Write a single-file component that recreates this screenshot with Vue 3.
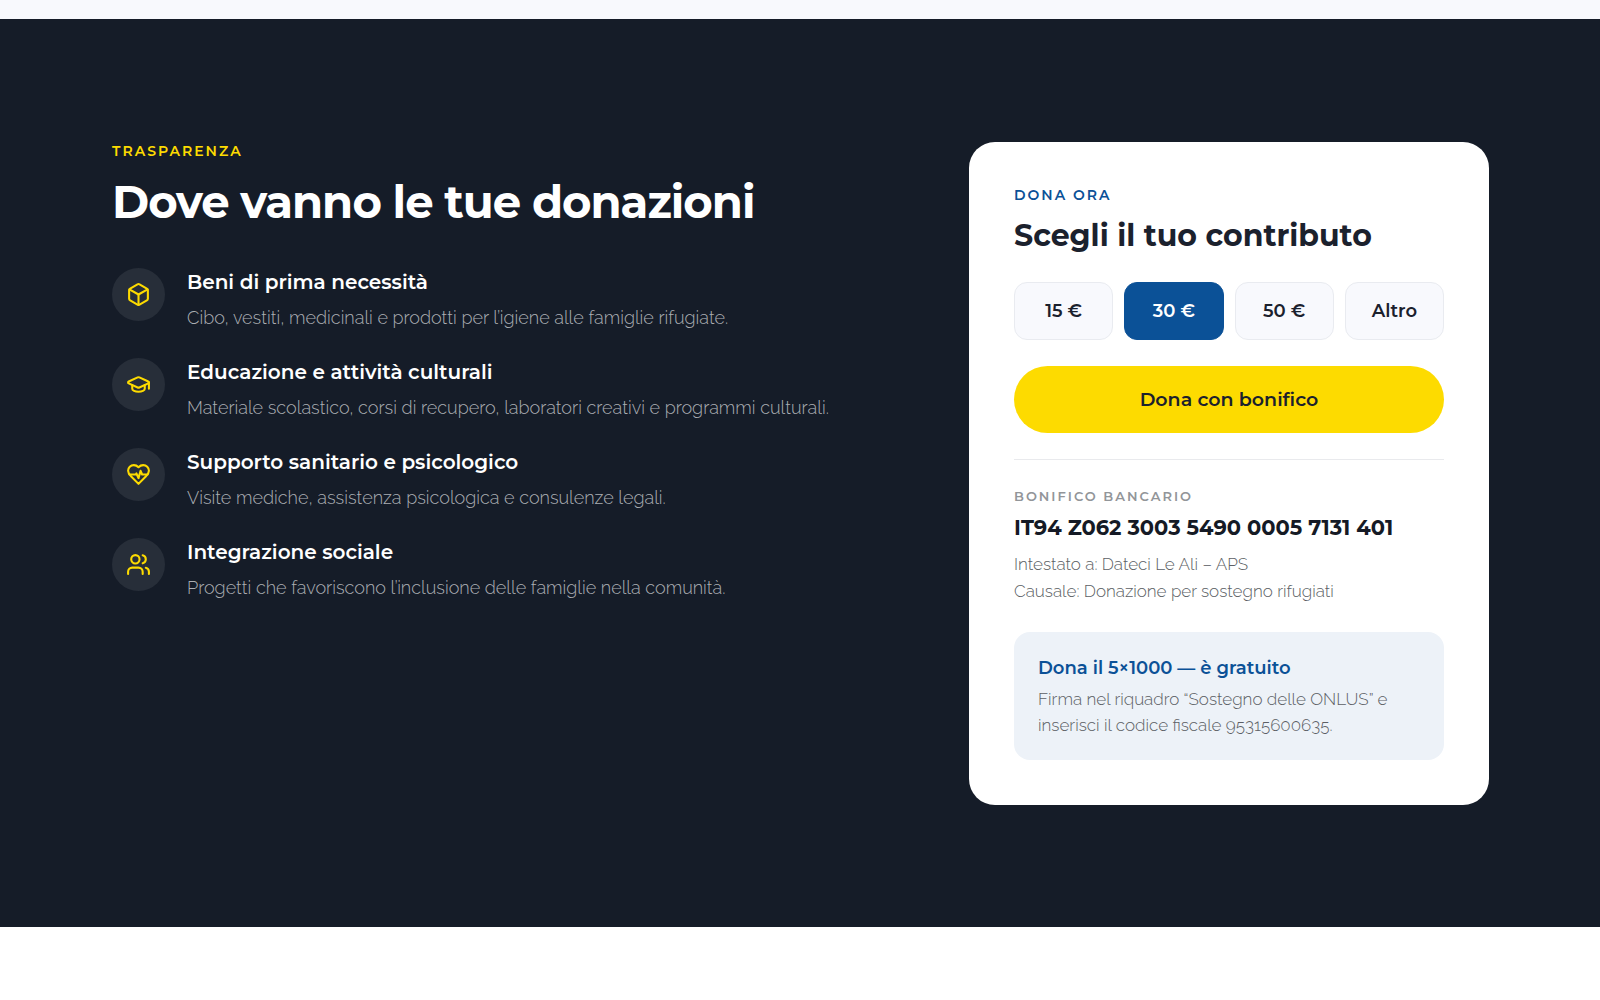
<script setup>
import { ref } from 'vue'

const items = [
  {
    title: 'Beni di prima necessità',
    text: 'Cibo, vestiti, medicinali e prodotti per l’igiene alle famiglie rifugiate.',
    paths: [
      'M21 8a2 2 0 0 0-1-1.73l-7-4a2 2 0 0 0-2 0l-7 4A2 2 0 0 0 3 8v8a2 2 0 0 0 1 1.73l7 4a2 2 0 0 0 2 0l7-4A2 2 0 0 0 21 16Z',
      'm3.3 7 8.7 5 8.7-5',
      'M12 22V12'
    ]
  },
  {
    title: 'Educazione e attività culturali',
    text: 'Materiale scolastico, corsi di recupero, laboratori creativi e programmi culturali.',
    paths: [
      'M21.42 10.922a1 1 0 0 0-.019-1.838L12.83 5.18a2 2 0 0 0-1.66 0L2.6 9.08a1 1 0 0 0 0 1.832l8.57 3.908a2 2 0 0 0 1.66 0z',
      'M22 10v6',
      'M6 12.5V16a6 3 0 0 0 12 0v-3.5'
    ]
  },
  {
    title: 'Supporto sanitario e psicologico',
    text: 'Visite mediche, assistenza psicologica e consulenze legali.',
    paths: [
      'M19 14c1.49-1.46 3-3.21 3-5.5A5.5 5.5 0 0 0 16.5 3c-1.76 0-3 .5-4.5 2-1.5-1.5-2.74-2-4.5-2A5.5 5.5 0 0 0 2 8.5c0 2.3 1.5 4.05 3 5.5l7 7Z',
      'M3.22 12H9.5l.5-1 2 4.5 2-7 1.5 3.5h5.27'
    ]
  },
  {
    title: 'Integrazione sociale',
    text: 'Progetti che favoriscono l’inclusione delle famiglie nella comunità.',
    paths: [
      'M16 21v-2a4 4 0 0 0-4-4H6a4 4 0 0 0-4 4v2',
      'M13 7a4 4 0 1 1-8 0a4 4 0 1 1 8 0',
      'M22 21v-2a4 4 0 0 0-3-3.87',
      'M16 3.13a4 4 0 0 1 0 7.75'
    ]
  }
]

const amounts = ['15 €', '30 €', '50 €', 'Altro']
const selected = ref('30 €')
</script>

<template>
  <main class="page">
    <section class="donations">
      <div class="container">
        <div class="info">
          <p class="eyebrow">TRASPARENZA</p>
          <h2>Dove vanno le tue donazioni</h2>
          <ul class="items">
            <li v-for="item in items" :key="item.title" class="item">
              <span class="icon">
                <svg viewBox="0 0 24 24" aria-hidden="true">
                  <path v-for="d in item.paths" :key="d" :d="d" />
                </svg>
              </span>
              <div>
                <h3>{{ item.title }}</h3>
                <p>{{ item.text }}</p>
              </div>
            </li>
          </ul>
        </div>

        <aside class="card">
          <p class="eyebrow blue">DONA ORA</p>
          <h3 class="card-title">Scegli il tuo contributo</h3>
          <div class="amounts">
            <button
              v-for="amount in amounts"
              :key="amount"
              type="button"
              class="amount"
              :class="{ active: amount === selected }"
              :aria-pressed="amount === selected"
              @click="selected = amount"
            >{{ amount }}</button>
          </div>
          <button type="button" class="donate">Dona con bonifico</button>

          <div class="bank">
            <p class="eyebrow grey">BONIFICO BANCARIO</p>
            <p class="iban">IT94 Z062 3003 5490 0005 7131 401</p>
            <p class="small">Intestato a: Dateci Le Ali – APS</p>
            <p class="small">Causale: Donazione per sostegno rifugiati</p>
          </div>

          <div class="notice">
            <h4>Dona il 5×1000 — è gratuito</h4>
            <p>Firma nel riquadro “Sostegno delle ONLUS” e inserisci il codice fiscale 95315600635.</p>
          </div>
        </aside>
      </div>
    </section>
  </main>
</template>

<style>
body {
  margin: 0;
  background: #fff;
}
</style>

<style scoped>
.page {
  border-top: 19px solid #f8f9fd;
  font-family: Raleway, "Open Sans", sans-serif;
  font-weight: 300;
}

h2, h3, h4, p, ul {
  margin: 0;
  padding: 0;
}

h2, h3, h4, button, .eyebrow, .iban {
  font-family: Montserrat, Inter, sans-serif;
  font-weight: 600;
}

.donations {
  background: #151c28;
  padding: 123px 111px 122px 112px;
}

.container {
  display: grid;
  grid-template-columns: minmax(0, 1fr) 520px;
  gap: 88px;
  max-width: 1377px;
  margin: 0 auto;
}

.eyebrow {
  color: #fddb00;
  font-size: 14px;
  line-height: 18px;
  letter-spacing: 2px;
}

.eyebrow.blue {
  color: #0b5197;
}

.eyebrow.grey {
  color: #929599;
  font-size: 13px;
}

h2 {
  margin-top: 17px;
  color: #fff;
  font-size: 45px;
  font-weight: 700;
  line-height: 50px;
  letter-spacing: -1px;
}

.items {
  display: grid;
  gap: 26px;
  margin-top: 41px;
  list-style: none;
}

.item {
  display: flex;
  gap: 22px;
}

.icon {
  display: flex;
  flex: none;
  align-items: center;
  justify-content: center;
  width: 53px;
  height: 53px;
  border-radius: 50%;
  background: #272e39;
}

.icon svg {
  width: 25px;
  height: 25px;
  fill: none;
  stroke: #fddb00;
  stroke-width: 2;
  stroke-linecap: round;
  stroke-linejoin: round;
}

.item h3 {
  color: #fff;
  font-size: 20px;
  line-height: 28px;
}

.item p {
  margin-top: 8px;
  color: #abaeb3;
  font-size: 18px;
  line-height: 28px;
}

/* Donation card */
.card {
  padding: 44px 45px 45px;
  border-radius: 26px;
  background: #fff;
}

.card-title {
  margin-top: 12px;
  color: #1b212d;
  font-size: 30px;
  font-weight: 700;
  line-height: 40px;
}

.amounts {
  display: grid;
  grid-template-columns: repeat(4, 1fr);
  gap: 11px;
  margin-top: 26px;
}

.amount {
  height: 58px;
  padding: 0;
  border: 1px solid #e9ebf0;
  border-radius: 13px;
  background: #f8f9fd;
  color: #1b212d;
  font-size: 18px;
  cursor: pointer;
}

.amount.active {
  border-color: #0b5197;
  background: #0b5197;
  color: #fff;
}

.donate {
  width: 100%;
  height: 67px;
  margin-top: 26px;
  border: none;
  border-radius: 34px;
  background: #fddb00;
  color: #1b212d;
  font-size: 19px;
  cursor: pointer;
}

.bank {
  margin-top: 26px;
  padding-top: 27px;
  border-top: 1px solid #e9eaed;
}

.iban {
  margin-top: 9px;
  color: #151a25;
  font-size: 21px;
  font-weight: 700;
  line-height: 28px;
}

.small {
  color: #5c5f65;
  font-size: 17px;
  line-height: 27px;
}

.iban + .small {
  margin-top: 9px;
}

.notice {
  margin-top: 27px;
  padding: 22px 24px;
  border-radius: 16px;
  background: #edf2f8;
}

.notice h4 {
  color: #0b5197;
  font-size: 18px;
  line-height: 28px;
}

.notice p {
  margin-top: 4px;
  color: #5c5f65;
  font-size: 17px;
  line-height: 26px;
}
</style>
